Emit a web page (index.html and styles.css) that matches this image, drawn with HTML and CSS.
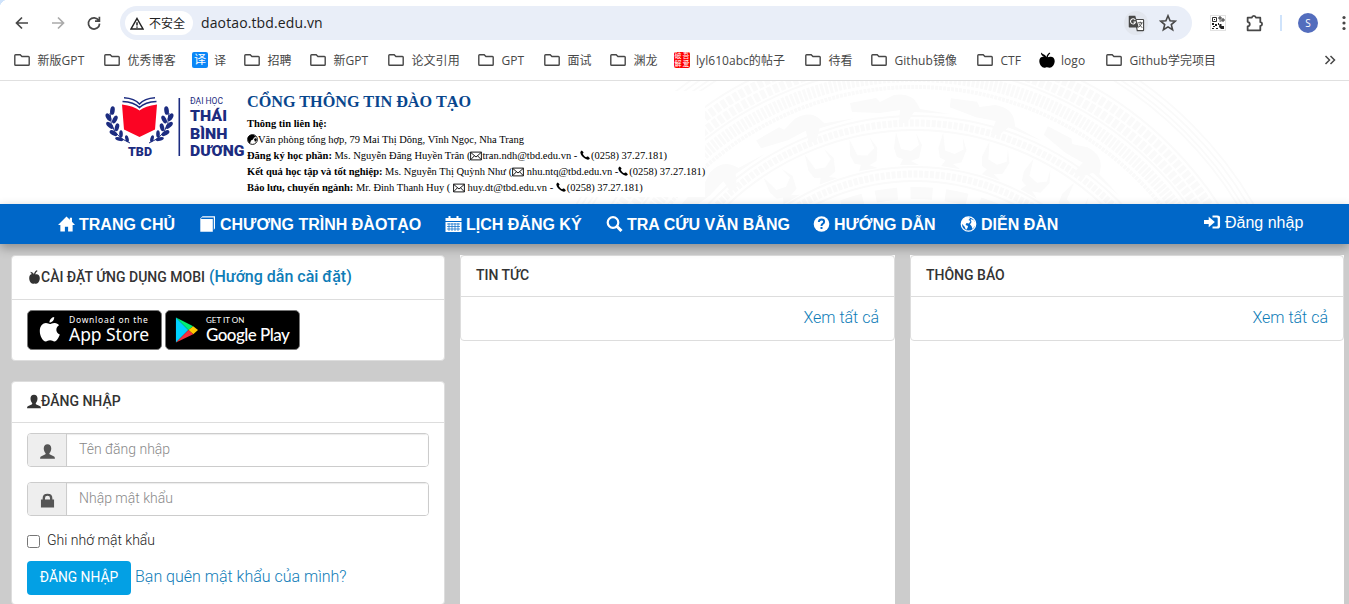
FILE: index.html
```
<!DOCTYPE html>
<html lang="vi">
<head>
<meta charset="utf-8">
<title>Cổng thông tin đào tạo</title>
<link rel="stylesheet" href="styles.css">
</head>
<body>
<svg class="defs" aria-hidden="true">
  <symbol id="folder" viewBox="0 0 16 16"><path d="M1.6 2.800h4.600l1.700 1.700h6.500q.8 0 .8.800v7.200q0 .8-.8.800H1.600q-.8 0-.8-.8V3.600q0-.8.8-.8z" fill="none" stroke="#474747" stroke-width="1.400"/></symbol>
  <symbol id="apple" viewBox="0 0 16 16"><path d="M7.400 5C6.800 2.900 4.600 2.800 2 .5 1.600 2.700 3.500 4.300 5.200 4.800 2.600 4.300.3 5.600.3 9c0 3.600 2.700 6.700 5 6.700 1.100 0 1.700-.5 2.700-.5s1.700.5 2.700.5c2.400 0 5-3.200 5-6.700 0-3.300-2.400-4.700-4.600-4.300-1 .2-1.700.5-2.300.6C9 3.700 9.900 2.400 11.300 1.500L10.500.6C8.800 1.700 7.900 3.200 7.400 5z"/></symbol>
  <symbol id="fruit" viewBox="0 0 11 14"><path d="M5 4.600C5 2.800 6 1.200 7.800.2l.8.900C7.200 1.900 6.500 3 6.400 4.500c2.200-.9 4.400.6 4.400 3.600 0 3.200-1.800 5.700-3.600 5.700-.6 0-1.100-.3-1.700-.3s-1.100.3-1.700.3C2 13.800.2 11.300.2 8.100.2 5.600 1.700 4 3.400 4.100 2.200 3.600 1.500 2.800 1.500 1.700 3.400 2.100 4.600 3 5 4.600z"/></symbol>
  <symbol id="user" viewBox="0 0 16 16"><path d="M8 .2c2.600 0 4 1.900 4 4.500 0 1.800-.8 3.800-1.800 4.900-.5.600-.2 1.400.5 1.700l3.800 1.700c.9.400 1.400.9 1.400 2.600H.1c0-1.700.5-2.200 1.400-2.600l3.800-1.700c.7-.3 1-1.100.5-1.700-1-1.100-1.800-3.100-1.800-4.900C4 2.100 5.400.2 8 .2z"/></symbol>
  <symbol id="mail" viewBox="0 0 12 10"><path d="M.6 1.100h10.800v7.800H.6zM.6 1.300 6 6l5.400-4.700M.8 8.600l3.600-3.800M11.200 8.600 7.600 4.800" fill="none" stroke="#000" stroke-width=".9"/></symbol>
  <symbol id="phone" viewBox="0 0 10 10"><path d="M1.800.4 3.300 1.900q.4.500 0 1L2.700 3.700c.7 1.600 1.900 2.800 3.500 3.500l.9-.6q.5-.4 1 0l1.500 1.500q.3.400-.1.900c-1.100 1.100-2.500.9-4.600-.4C2.500 7.200.8 5.100.4 3.100.2 1.900.7 1 1.800.4z"/></symbol>
</svg>

<div class="browser">
  <div class="toolbar">
    <svg class="nav-ico back" viewBox="0 0 16 16"><path d="M14 8H3M8 2.500 2.500 8 8 13.500"/></svg>
    <svg class="nav-ico forward" viewBox="0 0 16 16"><path d="M2 8h11M8 2.500 13.500 8 8 13.500"/></svg>
    <svg class="nav-ico reload" viewBox="0 0 16 16"><path d="M12.800 5.500A5.600 5.600 0 1 0 13.600 8.600M13.400 1.800v4.400H9"/></svg>
    <div class="omnibox">
      <span class="chip"><svg viewBox="0 0 14 13"><path d="M7 1.500 13 12H1zM7 5.200v3.300M7 9.500v1.200" fill="none" stroke="#222" stroke-width="1.500"/></svg>不安全</span>
      <span class="url">daotao.tbd.edu.vn</span>
      <span class="translate"><svg viewBox="0 0 18 18"><path d="M7.600 4.800h8.200q.7 0 .7.700v10.300q0 .7-.7.700H9.800z" fill="#fff" stroke="#474747" stroke-width="1.200"/><path d="M1.500.8h6.200l3.800 12.400h-10Q.8 13.200.8 12.500v-11Q.8.8 1.500.8z" fill="#474747"/><path d="M7.700 5.400A2.700 2.700 0 1 0 8 7.300H5.800" fill="none" stroke="#fff" stroke-width="1.100"/><path d="M10.500 8.300H15.500M13 7v1.300M14.600 8.300q-.7 3-3.200 4.500M11.700 9.700l3.300 3.800" fill="none" stroke="#474747"/></svg></span>
      <svg class="star" viewBox="0 0 18 18"><path d="m9 1.800 2.100 5 5.200.4-4 3.400 1.300 5.100L9 12.900l-4.600 2.800 1.300-5.100-4-3.400 5.200-.4z" fill="none" stroke="#474747" stroke-width="1.600"/></svg>
    </div>
    <svg class="qr" viewBox="0 0 16 16"><path fill="#e2e2e2" d="M0 0h16v16H0z"/><path fill="#fff" d="M1 1h14v14H1z"/><path d="M2.500 2.500h4v4h-4zM9 2h2v2H9zM12 4h2v2h-2zM9.500 6h2" fill="none" stroke="#333" stroke-width="1"/><path d="M4 4h1v1H4zM2 8h2v2H2zM5 9h2v2H5zM3 11h2v1H3zM2 13h2v1H2zM6 13h2v1H6zM8 8h1v2H8zM9.500 9h2v2h2.500v3H11l-2-2z" fill="#222"/></svg>
    <svg class="puzzle" viewBox="0 0 18 18"><path d="M2.500 3.500h4q.3-1.700 1.900-1.700t1.900 1.700h4.200v4.200q1.700.2 1.700 1.800t-1.700 1.800v4.200h-12v-3.700q2-.4 2-2.200t-2-2.200z" fill="none" stroke="#474747" stroke-width="1.700" stroke-linejoin="round"/></svg>
    <i class="divider"></i>
    <span class="avatar">S</span>
    <svg class="dots" viewBox="0 0 4 16"><circle cx="2" cy="2.500" r="1.600"/><circle cx="2" cy="8" r="1.600"/><circle cx="2" cy="13.500" r="1.600"/></svg>
  </div>
  <div class="bookmarks">
    <span><svg><use href="#folder"/></svg>新版GPT</span>
    <span><svg><use href="#folder"/></svg>优秀博客</span>
    <span class="post"><b class="fav blue">译</b>译</span>
    <span><svg><use href="#folder"/></svg>招聘</span>
    <span><svg><use href="#folder"/></svg>新GPT</span>
    <span><svg><use href="#folder"/></svg>论文引用</span>
    <span><svg><use href="#folder"/></svg>GPT</span>
    <span><svg><use href="#folder"/></svg>面试</span>
    <span><svg><use href="#folder"/></svg>渊龙</span>
    <span class="post"><b class="fav red"><i>破</i><i>吾</i><i>解</i><i>爱</i></b>lyl610abc的帖子</span>
    <span><svg><use href="#folder"/></svg>待看</span>
    <span><svg><use href="#folder"/></svg>Github镜像</span>
    <span><svg><use href="#folder"/></svg>CTF</span>
    <span class="post"><svg><use href="#apple"/></svg>logo</span>
    <span><svg><use href="#folder"/></svg>Github学完项目</span>
    <svg class="more" viewBox="0 0 12 12"><path d="m1.500 2 4 4-4 4M6.500 2l4 4-4 4" fill="none" stroke="#474747" stroke-width="1.500"/></svg>
  </div>
</div>

<header class="masthead">
  <svg class="drum" viewBox="0 0 1349 123" fill="none" stroke="#fafafa">
    <g stroke-width="1.800"><circle cx="915" cy="321" r="392"/><circle cx="915" cy="321" r="387"/><circle cx="915" cy="321" r="382"/><circle cx="915" cy="321" r="378"/></g>
    <circle cx="915" cy="321" r="362" stroke-width="2"/>
    <circle cx="915" cy="321" r="354" stroke-width="9" stroke-dasharray="5 2"/>
    <circle cx="915" cy="321" r="343" stroke-width="9" stroke-dasharray="5 2"/>
    <circle cx="915" cy="321" r="336" stroke-width="2"/>
    <circle cx="915" cy="321" r="326" stroke-width="12" stroke-dasharray="3 1.500"/>
    <circle cx="915" cy="321" r="315" stroke-width="4" stroke-dasharray="3 1"/>
    <g fill="#fafafa" stroke="none">
      <path id="bird" d="M850 22l26-5 4 4 14-7q18-3 24 10l2 4 30 5-36-2-7 11h-8l1-13-20 3-28-1z"/>
      <use href="#bird" transform="rotate(19 915 321)"/><use href="#bird" transform="rotate(38 915 321)"/><use href="#bird" transform="rotate(-19 915 321)"/><use href="#bird" transform="rotate(-38 915 321)"/>
    </g>
    <circle cx="915" cy="321" r="286" stroke-width="2"/><circle cx="915" cy="321" r="279" stroke-width="7" stroke-dasharray="4 1.500"/><circle cx="915" cy="321" r="272" stroke-width="2"/>
    <g fill="#fafafa" stroke="none">
      <path id="deer" d="M896 51l5 17 10 2 8-6-3-12 6 12-3 13-8 3 8 4h-19l3-6-6-2-3-9z"/>
      <use href="#deer" transform="rotate(10 915 321)"/><use href="#deer" transform="rotate(20 915 321)"/><use href="#deer" transform="rotate(30 915 321)"/><use href="#deer" transform="rotate(40 915 321)"/><use href="#deer" transform="rotate(-10 915 321)"/><use href="#deer" transform="rotate(-20 915 321)"/><use href="#deer" transform="rotate(-30 915 321)"/>
    </g>
    <circle cx="915" cy="321" r="235" stroke-width="2"/><circle cx="915" cy="321" r="228" stroke-width="7" stroke-dasharray="4 1.500"/><circle cx="915" cy="321" r="221" stroke-width="2"/>
    <circle cx="915" cy="321" r="209" stroke-width="12" stroke-dasharray="22 13"/>
  </svg>
  <svg class="logo" viewBox="0 0 142 66">
    <path d="M17 8.500Q29 10 34.500 14.500 40 10 52 8.500L50 33.500 34.500 41 19 33.500z" fill="#fb0423"/>
    <path d="M17.500 5.500Q29 6 34.500 11.500 40 6 51.500 5.500M19 1.800Q29.500 2.500 34.500 8 39.500 2.500 50 1.800" fill="none" stroke="#1c2c80" stroke-width="1.600"/>
    <g id="laurel" fill="#1c2c80"><path d="M5 17Q5 40 25 47" fill="none" stroke="#1c2c80"/>
      <ellipse cx="7.500" cy="14.500" rx="2.300" ry="4.300" transform="rotate(8 7 14)"/><ellipse cx="3.800" cy="21.500" rx="2.300" ry="4.300" transform="rotate(-28 3 22)"/><ellipse cx="10" cy="23" rx="2.200" ry="4.200" transform="rotate(28 9 23)"/><ellipse cx="5" cy="30" rx="2.200" ry="4.400" transform="rotate(-45 4 30)"/><ellipse cx="12" cy="31" rx="2.100" ry="4" transform="rotate(15 11 31)"/><ellipse cx="9" cy="38" rx="2.200" ry="4.300" transform="rotate(-60 8 38)"/><ellipse cx="16" cy="38" rx="1.800" ry="3.800"/><ellipse cx="15" cy="44" rx="1.800" ry="4.200" transform="rotate(-75 14 44)"/><ellipse cx="22" cy="43" rx="1.700" ry="3.500" transform="rotate(-15 21 43)"/></g>
    <use href="#laurel" transform="matrix(-1 0 0 1 69 0)"/>
    <path d="M74.300 2v58" stroke="#1c2c80" stroke-width="1.600"/>
    <g class="logo-text" fill="#1c2c80"><text x="23" y="59.700" font-size="12" textLength="24" lengthAdjust="spacingAndGlyphs">TBD</text>
    <text class="thin" x="85" y="8" font-size="8.500" textLength="33" lengthAdjust="spacingAndGlyphs">ĐẠI HỌC</text>
    <text x="85" y="24.900" font-size="15" textLength="37" lengthAdjust="spacingAndGlyphs">THÁI</text>
    <text x="85" y="42.700" font-size="15" textLength="37.500" lengthAdjust="spacingAndGlyphs">BÌNH</text>
    <text x="85" y="60.300" font-size="15" textLength="54.500" lengthAdjust="spacingAndGlyphs">DƯƠNG</text></g>
  </svg>
  <div class="contact">
    <h1>CỔNG THÔNG TIN ĐÀO TẠO</h1>
    <p><b>Thông tin liên hệ:</b></p>
    <p class="l2"><svg class="globe" viewBox="0 0 11 11"><circle cx="5.500" cy="5.500" r="4.900" fill="#fff" stroke="#000" stroke-width=".9"/><path d="M1 3Q3 0 7 1l2 2-2 .5-1 2-2 1-1 3Q0 7 1 3zM7 5l2-1 1 2-2 2z"/></svg>Văn phòng tổng hợp, 79 Mai Thị Dõng, Vĩnh Ngọc, Nha Trang</p>
    <p class="l3"><b>Đăng ký học phần:</b> Ms. Nguyễn Đăng Huyền Trân (<svg class="mail"><use href="#mail"/></svg>tran.ndh@tbd.edu.vn - <svg class="phone"><use href="#phone"/></svg>(0258) 37.27.181)</p>
    <p class="l4"><b>Kết quả học tập và tốt nghiệp:</b> Ms. Nguyễn Thị Quỳnh Như (<svg class="mail"><use href="#mail"/></svg> nhu.ntq@tbd.edu.vn -<svg class="phone"><use href="#phone"/></svg>(0258) 37.27.181)</p>
    <p class="l5"><b>Bảo lưu, chuyển ngành:</b> Mr. Đinh Thanh Huy ( <svg class="mail"><use href="#mail"/></svg> huy.dt@tbd.edu.vn - <svg class="phone"><use href="#phone"/></svg>(0258) 37.27.181)</p>
  </div>
</header>

<nav class="mainnav">
  <a class="n1"><svg viewBox="0 0 18 16"><path d="M9 0 12.500 3.500V1.500h2.300v4.200L18 9h-2.500v7h-4.800v-5H7.300v5H2.500V9H0z"/></svg><span>TRANG CHỦ</span></a>
  <a class="n2"><svg viewBox="0 0 16 16"><path d="M3 .3h12.500v12L14.300 14V1.600H2.500L1.300 3h12v12.700H.8V2.600z"/></svg><span>CHƯƠNG TRÌNH ĐÀOTẠO</span></a>
  <a class="n3"><svg viewBox="0 0 16 16"><path d="M0 2h3V0h2v2h6V0h2v2h3v3H0zM0 6h16v10H0z"/><path d="M1.500 8h13M1.500 10.500h13M1.500 13h13M3.500 7v8M6.500 7v8M9.500 7v8M12.500 7v8" stroke="#0067c8" stroke-width=".7"/></svg><span>LỊCH ĐĂNG KÝ</span></a>
  <a class="n4"><svg viewBox="0 0 16 16"><path d="m10 10 5 5" stroke="#fff" stroke-width="3"/><circle cx="6.500" cy="6.500" r="5.300" fill="none" stroke="#fff" stroke-width="2.200"/></svg><span>TRA CỨU VĂN BẰNG</span></a>
  <a class="n5"><svg viewBox="0 0 16 16"><circle cx="8" cy="8" r="7.800"/><path d="M5.300 6q.2-2.500 2.800-2.500 2.500 0 2.500 2.200 0 1.400-1.500 2.200Q8 8.600 8 9.900M8 11v2" fill="none" stroke="#0067c8" stroke-width="2"/></svg><span>HƯỚNG DẪN</span></a>
  <a class="n6"><svg viewBox="0 0 16 16"><circle cx="8" cy="8" r="7.200" fill="none" stroke="#fff" stroke-width="1.300"/><path d="M1.500 5q2-4 6.500-4l1.500 1.500L8 4l2 1-1.500 2.500L6 7 5 9l2.500 1L7 12l-1.500 2-1.500-3.500L1.500 8zM10 3l3 1 2 3-.5 3L12 13l-1-3-1.500-1.500L11 6z"/></svg><span>DIỄN ĐÀN</span></a>
  <a class="login"><svg viewBox="0 0 18 16"><path d="M0 6h5V2.500L11.500 8 5 13.500V10H0z"/><path d="M9 1h5q3 0 3 2.500v9Q17 15 14 15H9v-2.200h4.500q1 0 1-1v-7.600q0-1-1-1H9z"/></svg><span>Đăng nhập</span></a>
</nav>

<main class="content">
  <div class="col">
    <section class="panel apps">
      <h2><svg class="apple"><use href="#fruit"/></svg><span>CÀI ĐẶT ỨNG DỤNG MOBI</span> <a>(Hướng dẫn cài đặt)</a></h2>
      <div class="stores">
        <div class="store"><svg viewBox="0 0 22 28"><path d="M15.200 1c.2 3-2 5.500-4.700 5.600C10.200 3.900 12.600 1.300 15.200 1zM10.800 8c1.200 0 2.700-1.300 5-1.100 1.700.1 3.300.9 4.200 2.300-3.900 2.400-3.300 7.700.8 9.300-1 2.900-3.100 6.900-5.200 6.900-1.800 0-2.400-1.100-4.500-1.100s-2.800 1.100-4.400 1.100C3.800 25.400.8 20 .8 15 .8 9.900 3.900 7 6.900 7c1.800 0 3.100 1 3.900 1z" fill="#fff"/></svg><div class="apple-copy"><small>Download on the</small><strong>App Store</strong></div></div>
        <div class="store play"><svg viewBox="0 0 24 26"><path d="M1 0v26l13-13z" fill="#00d1ff"/><path d="M1 0l18 9-5 4z" fill="#00ef76"/><path d="M19 9l5 4-5 4.500-5-4.500z" fill="#ffc900"/><path d="M1 26l18-8.500-5-4.500z" fill="#f5303e"/></svg><div><small>GET IT ON</small><strong>Google Play</strong></div></div>
      </div>
    </section>
    <section class="panel signin">
      <h2><svg class="user"><use href="#user"/></svg><span>ĐĂNG NHẬP</span></h2>
      <form>
        <div class="field"><span><svg><use href="#user"/></svg></span><input placeholder="Tên đăng nhập"></div>
        <div class="field"><span><svg viewBox="0 0 16 16"><path d="M1 7h1.800V5.500Q2.800.8 8 .8t5.200 4.700V7H15v8.500H1zM5.300 7h5.400V5.500Q10.700 3 8 3T5.300 5.500z" fill-rule="evenodd"/></svg></span><input placeholder="Nhập mật khẩu"></div>
        <label><input type="checkbox"><span>Ghi nhớ mật khẩu</span></label>
        <div class="actions"><button type="button">ĐĂNG NHẬP</button><a>Bạn quên mật khẩu của mình?</a></div>
      </form>
    </section>
  </div>
  <div class="col white"><section class="panel news"><h2>TIN TỨC</h2><p><a>Xem tất cả</a></p></section></div>
  <div class="col white"><section class="panel news"><h2>THÔNG BÁO</h2><p><a>Xem tất cả</a></p></section></div>
</main>
</body>
</html>
```
FILE: styles.css
```
* { box-sizing: border-box; }
body { margin: 0; width: 1349px; height: 604px; overflow: hidden; background: #ccc; font-family: Roboto, "Open Sans", sans-serif; display: flex; flex-direction: column; }
h1, h2, p { margin: 0; }
.defs { position: absolute; width: 0; height: 0; }

/* Browser chrome */
.browser { height: 81px; flex: none; background: #fff; border-bottom: 1px solid #e0e0e0; font-family: "Open Sans", "Noto Sans CJK SC", sans-serif; color: #474747; }
.toolbar { height: 46px; display: flex; align-items: center; padding-left: 14px; background: radial-gradient(circle at 8px 8px, #fff 8px, #cfe3fb 8.5px) 0 0 / 8px 8px no-repeat; }
.nav-ico { width: 16px; height: 16px; fill: none; stroke: #474747; stroke-width: 1.7; margin-right: 20px; }
.nav-ico.forward { stroke: #aaa; }
.nav-ico.reload { margin-right: 18px; }
.omnibox { width: 1072px; height: 34px; border-radius: 17px; background: #e9eef8; display: flex; align-items: center; padding: 0 15px 0 5px; }
.chip { height: 24px; width: 68px; border-radius: 12px; background: #fff; display: flex; align-items: center; font-size: 12px; color: #222; padding-left: 5px; }
.chip svg { width: 14px; height: 13px; margin-right: 5px; }
.url { font-size: 14px; color: #222; margin: -2px 0 0 8px; letter-spacing: .12px; flex: 1; }
.translate { width: 24px; height: 24px; border-radius: 50%; background: #e2e6ee; display: flex; align-items: center; justify-content: center; margin-right: 11px; }
.translate svg { width: 17px; height: 17px; }
.star { width: 18px; height: 18px; }
.qr { width: 16px; height: 16px; margin-left: 18px; }
.puzzle { width: 19px; height: 19px; margin-left: 19px; }
.divider { width: 2px; height: 16px; background: #cfe3fb; margin-left: 16px; }
.avatar { width: 20px; height: 20px; border-radius: 50%; background: #536dbd; color: #fff; font-size: 10px; margin-left: 16px; display: flex; align-items: center; justify-content: center; }
.dots { width: 4px; height: 16px; margin-left: 24px; fill: #474747; }
.bookmarks { height: 28px; display: grid; align-items: center; padding-left: 14px; font-size: 12px; white-space: nowrap; grid-template-columns: 90px 88px 52px 66px 78px 90px 66px 66px 64px 131px 66px 106px 62px 67px 218px 12px; }
.bookmarks span { display: flex; align-items: center; gap: 7.5px; height: 20px; letter-spacing: .05px; }
.bookmarks .post { gap: 6px; }
.bookmarks span svg { width: 16px; height: 16px; }
.more { width: 12px; height: 12px; }
.fav { width: 16px; height: 16px; border-radius: 2px; color: #fff; line-height: 16px; text-align: center; overflow: hidden; font-weight: 400; }
.blue { background: #0b87f7; }
.red { background: #f00; display: grid; grid-template-columns: 8px 8px; font-size: 7px; line-height: 8px; }
.red i { font-style: normal; }

/* Masthead */
.masthead { position: relative; height: 123px; flex: none; background: #fff; display: flex; align-items: flex-start; padding-left: 105px; }
.drum { position: absolute; left: 0; top: 0; width: 1349px; height: 123px; }
.logo { position: relative; width: 142px; height: 66px; margin-top: 15px; overflow: visible; }
.logo-text { font-family: Roboto, sans-serif; font-weight: 900; }
.logo-text .thin { font-weight: 400; }
.contact { position: relative; width: 458px; height: 106px; margin-top: 10px; background: #fff; font: 10.5px/16px "Liberation Serif", serif; color: #000; white-space: nowrap; }
.contact h1 { font-size: 16.2px; line-height: 22px; color: #08468d; margin-bottom: 3px; }
.contact p { height: 16px; }
.contact .globe { width: 11px; height: 11px; vertical-align: -2px; }
.contact .mail { width: 12px; height: 10px; vertical-align: -2px; }
.contact .phone { width: 10px; height: 10px; vertical-align: -1px; margin-right: 1px; }
.contact .l4, .contact .l5 { letter-spacing: -.015px; }

/* Main navigation */
.mainnav { position: relative; height: 40px; flex: none; background: #0067c8; display: flex; align-items: center; padding-left: 58px; font: bold 16px "Liberation Sans", sans-serif; color: #fff; box-shadow: 0 4px 10px rgba(0,0,0,.3); }
.mainnav a { display: flex; align-items: center; gap: 4px; white-space: nowrap; }
.mainnav svg { width: 17px; height: 16px; fill: #fff; flex: none; }
.mainnav span { padding-top: 2px; }
.n1 { width: 141px; }
.n2 { width: 246px; }
.n3 { width: 161px; }
.n4 { width: 207px; }
.n5 { width: 147px; }
.n6 { width: 244px; }
.login { font-weight: 400; margin-top: -4px; }

/* Three columns */
.content { flex: 1; min-height: 0; overflow: hidden; display: grid; grid-template-columns: 434px 435px 434px; column-gap: 15px; padding: 11px 0 0 11px; }
.col { display: flex; flex-direction: column; gap: 20px; min-width: 0; min-height: 0; }
.white { background: #fff; }
.panel { background: #fff; border: 1px solid #ddd; border-radius: 4px; flex: none; }
.panel h2 { font-size: 14px; font-weight: 500; color: #333; border-bottom: 1px solid #ddd; height: 41px; padding: 0 15px 2px; display: flex; align-items: center; white-space: nowrap; }
.panel a { color: #0e7cb7; font-size: 16px; }
.apps { height: 106px; }
.apps h2 { height: 44px; }
.apps h2 a { margin-left: 4px; }
.apple { width: 11px; height: 14px; margin: 0 1px 0 2px; fill: #333; }
.stores { display: flex; gap: 3px; padding: 10px 15px; }
.store { width: 135px; height: 40px; border-radius: 5px; background: #000; border: 1px solid #777; color: #fff; display: flex; align-items: center; padding-left: 11px; font-family: Lato, "Open Sans", sans-serif; white-space: nowrap; }
.store svg { width: 22px; height: 28px; margin-right: 8px; flex: none; }
.store div { display: flex; flex-direction: column; }
.store small { font-size: 8px; line-height: 9px; }
.store strong { font-size: 17px; line-height: 20px; font-weight: 500; letter-spacing: -.55px; }
.store .apple-copy { font-family: "Noto Sans", sans-serif; }
.apple-copy small { font-size: 8.5px; letter-spacing: .75px; }
.apple-copy strong { font-size: 17.5px; line-height: 21px; font-weight: 400; letter-spacing: -.05px; }
.play { padding-left: 9px; }
.play svg { width: 23px; height: 26px; }
.signin { height: 224px; }
.user { width: 14px; height: 15px; fill: #333; }
form { padding: 10px 15px 0; }
.field { display: flex; height: 34px; margin-bottom: 15px; border: 1px solid #ccc; border-radius: 4px; overflow: hidden; }
.field span { width: 39px; background: #eee; border-right: 1px solid #ccc; display: flex; align-items: center; justify-content: center; padding-top: 2px; }
.field svg { width: 15px; height: 15px; fill: #555; }
.field input { flex: 1; border: 0; padding: 0 12px 2px; font: 300 14px Roboto, sans-serif; box-shadow: inset 0 1px 1px rgba(0,0,0,.08); }
.field input::placeholder { color: #888; }
label { display: flex; align-items: center; height: 20px; font-size: 14px; font-weight: 300; color: #222; }
label span { padding-bottom: 2px; }
label input { width: 13px; height: 13px; margin: 1px 7px 0 0; }
.actions { display: flex; align-items: center; margin-top: 10px; gap: 4px; }
.actions button { width: 104px; height: 34px; padding: 0 0 2px; border: 0; border-radius: 4px; background: #03a0e4; color: #fff; font: 400 13.8px Roboto, sans-serif; }
.actions a, .news a { font-weight: 300; }
.actions a { padding-bottom: 3px; }
.news { height: 86px; }
.news p { display: flex; justify-content: flex-end; padding: 11px 15px; }
```
